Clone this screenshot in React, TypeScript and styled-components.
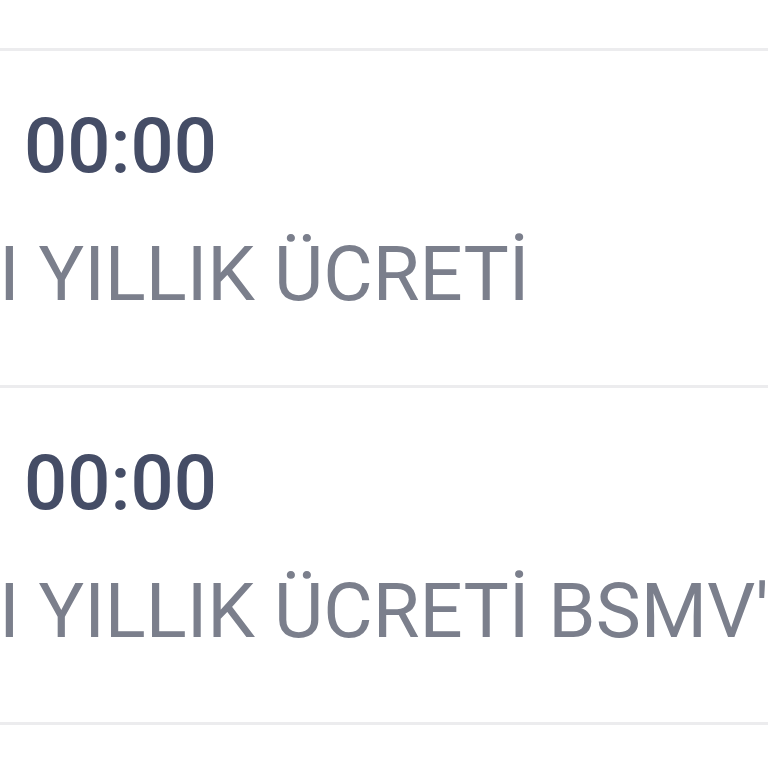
import React from "react";
import styled, { createGlobalStyle } from "styled-components";

const Global = createGlobalStyle`
  html, body { margin: 0; padding: 0; background: #ffffff; }
  body { font-family: Roboto, "Liberation Sans", sans-serif; }
`;

const Page = styled.div`
  width: 768px;
  height: 768px;
  overflow: hidden;
  background: #ffffff;
  display: flex;
  flex-direction: column;
`;

const TopSpacer = styled.div`
  height: 48px;
  flex: none;
`;

const Divider = styled.div`
  height: 3px;
  flex: none;
  background: #ececee;
`;

const Row = styled.div`
  flex: none;
  display: flex;
  flex-direction: column;
  padding: 57px 0 73px 24px;
  white-space: nowrap;
`;

const Time = styled.div`
  font-family: Roboto, "Liberation Sans", sans-serif;
  font-weight: 500;
  font-size: 76px;
  line-height: 76px;
  color: #454d66;
`;

const Label = styled.div`
  margin-top: 52px;
  margin-left: -25px;
  font-family: Roboto, "Liberation Sans", sans-serif;
  font-weight: 400;
  font-size: 76px;
  line-height: 76px;
  color: #7b7f8c;
`;

const items = [
  { time: "00:00", label: "I YILLIK ÜCRETİ" },
  { time: "00:00", label: "I YILLIK ÜCRETİ BSMV'Sİ" },
];

export default function App() {
  return (
    <>
      <Global />
      <Page>
        <TopSpacer />
        <Divider />
        {items.map((it, i) => (
          <React.Fragment key={i}>
            <Row>
              <Time>{it.time}</Time>
              <Label>{it.label}</Label>
            </Row>
            <Divider />
          </React.Fragment>
        ))}
      </Page>
    </>
  );
}
